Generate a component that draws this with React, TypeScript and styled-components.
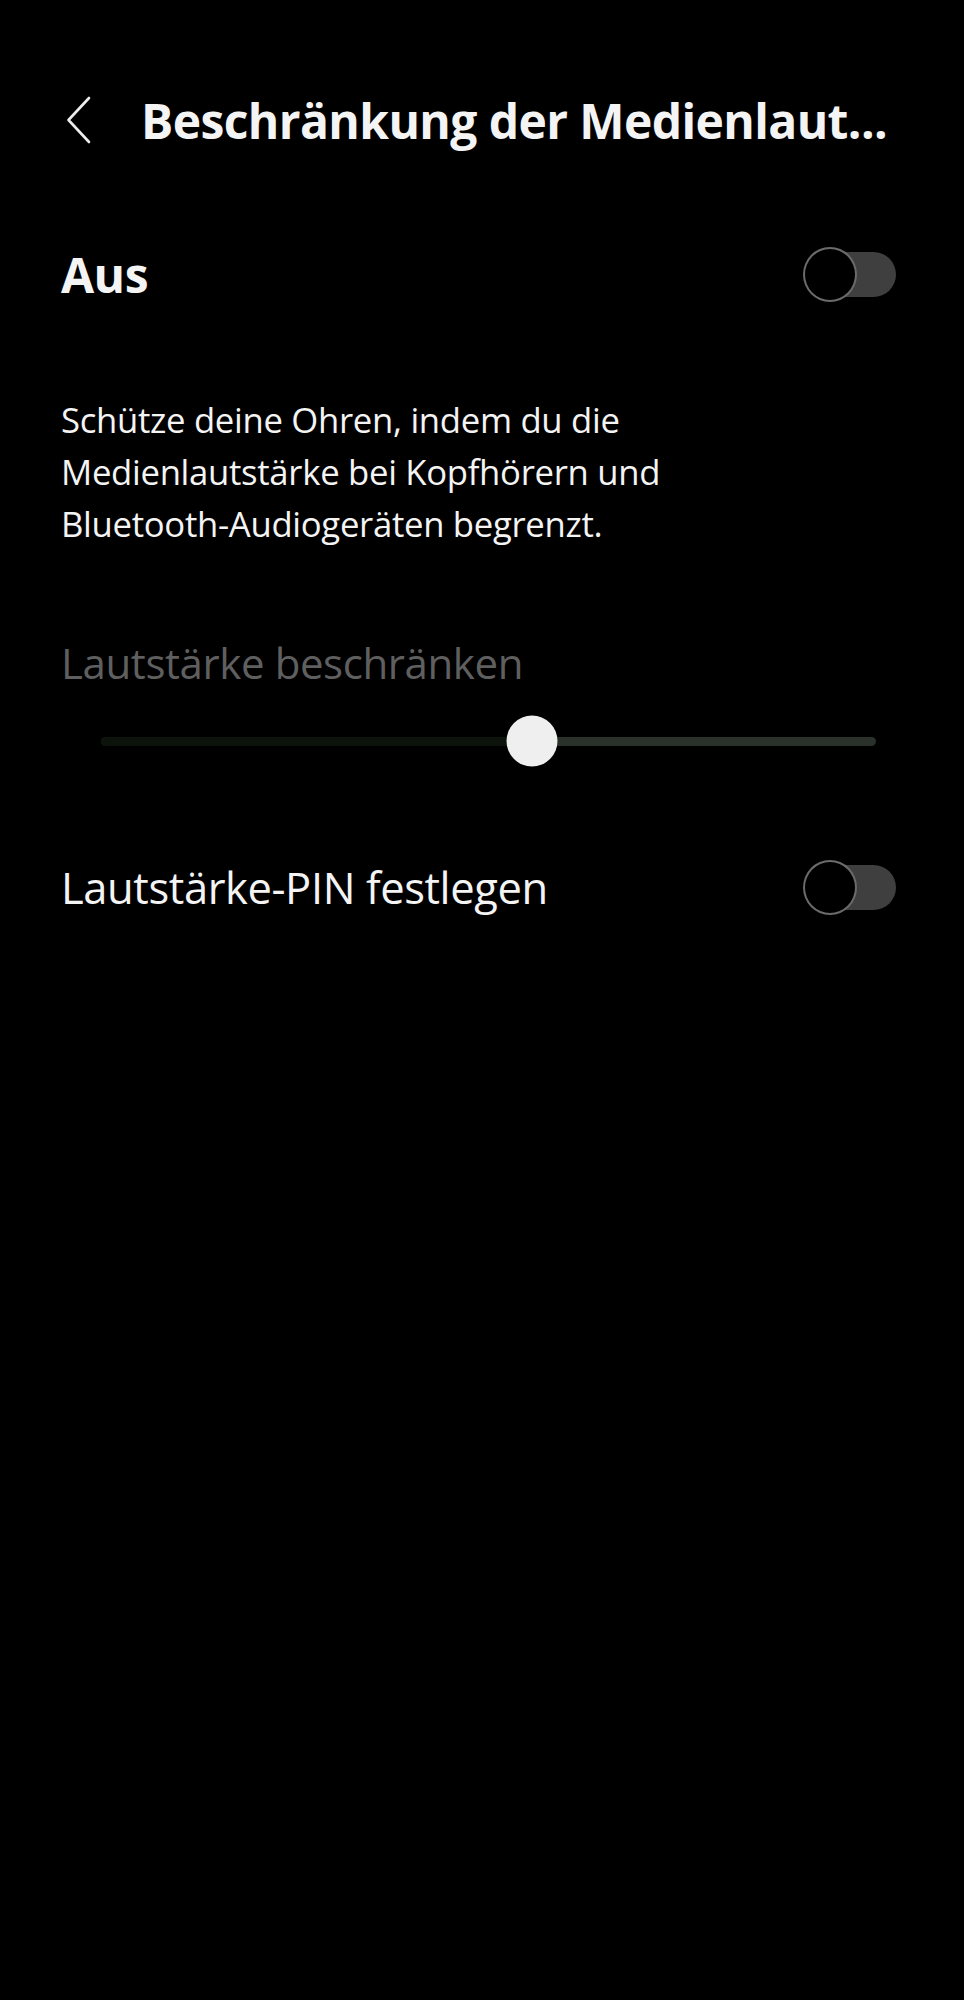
import React, { useState } from 'react';
import styled, { createGlobalStyle } from 'styled-components';

const GlobalStyle = createGlobalStyle`
  html, body {
    margin: 0;
    padding: 0;
    background: #000;
  }
  body {
    font-family: 'Open Sans', 'Noto Sans', sans-serif;
    color: #f4f4f4;
    -webkit-font-smoothing: antialiased;
  }
`;

const Page = styled.div`
  min-height: 2000px;
  box-sizing: border-box;
  padding: 80px 68px 0 61px;
  background: #000;
`;

const Header = styled.header`
  display: flex;
  align-items: center;
  height: 80px;
`;

const BackButton = styled.button`
  display: flex;
  align-items: center;
  width: 80px;
  height: 80px;
  padding: 0 0 0 5px;
  border: none;
  background: none;
  cursor: pointer;
`;

const Title = styled.h1`
  margin: 0;
  font-size: 48px;
  font-weight: 700;
  letter-spacing: -0.6px;
  white-space: nowrap;
  color: #f4f4f4;
`;

const SwitchRow = styled.div<{ $top: number }>`
  display: flex;
  align-items: center;
  justify-content: space-between;
  height: 100px;
  margin-top: ${p => p.$top}px;
`;

const RowLabel = styled.span<{ $main?: boolean }>`
  font-size: ${p => (p.$main ? 48 : 43.5)}px;
  font-weight: ${p => (p.$main ? 700 : 500)};
  letter-spacing: ${p => (p.$main ? -0.5 : -0.4)}px;
  color: #f4f4f4;
`;

const Description = styled.p`
  margin: 70px 0 0;
  max-width: 680px;
  font-size: 34.7px;
  font-weight: 500;
  line-height: 52px;
  letter-spacing: -0.3px;
  color: #f4f4f4;
`;

const SliderSection = styled.section`
  margin-top: 87px;
`;

const SliderLabel = styled.div`
  font-size: 42px;
  font-weight: 500;
  line-height: 52px;
  letter-spacing: -0.4px;
  color: #5f5f5f;
`;

const SliderArea = styled.div`
  display: flex;
  align-items: center;
  height: 60px;
  margin-top: 22px;
  padding: 0 20px 0 40px;
`;

const Track = styled.div`
  position: relative;
  flex: 1;
  height: 9px;
  border-radius: 5px;
  background: #2a302a;
`;

const TrackFill = styled.div`
  height: 100%;
  border-radius: 5px;
  background: #0b130b;
`;

const Thumb = styled.div`
  position: absolute;
  top: 50%;
  width: 51px;
  height: 51px;
  border-radius: 50%;
  background: #efefef;
  transform: translate(-50%, -50%);
`;

const ToggleTrack = styled.button<{ $on: boolean }>`
  position: relative;
  width: 86px;
  height: 45px;
  padding: 0;
  border: none;
  border-radius: 23px;
  background: ${p => (p.$on ? '#3e91ff' : '#3f3f3f')};
  cursor: pointer;
`;

const ToggleKnob = styled.span<{ $on: boolean }>`
  position: absolute;
  top: -5px;
  left: ${p => (p.$on ? '39px' : '-7px')};
  box-sizing: border-box;
  width: 54px;
  height: 55px;
  border: 2.5px solid #6b6b6b;
  border-radius: 50%;
  background: #000;
`;

const Toggle: React.FC<{ on: boolean; onToggle: () => void }> = ({ on, onToggle }) => (
  <ToggleTrack $on={on} onClick={onToggle}>
    <ToggleKnob $on={on} />
  </ToggleTrack>
);

const BackIcon = () => (
  <svg width="26" height="48" viewBox="0 0 26 48" fill="none">
    <path
      d="M23 2 L2.5 24 L23 46"
      stroke="#ededed"
      strokeWidth="2.6"
      strokeLinecap="round"
      strokeLinejoin="round"
    />
  </svg>
);

const App: React.FC = () => {
  const [limitOn, setLimitOn] = useState<boolean>(false);
  const [pinOn, setPinOn] = useState<boolean>(false);
  const level = 0.556;

  return (
    <Page>
      <GlobalStyle />
      <Header>
        <BackButton aria-label="Zurück">
          <BackIcon />
        </BackButton>
        <Title>Beschränkung der Medienlaut...</Title>
      </Header>

      <SwitchRow $top={64}>
        <RowLabel $main>Aus</RowLabel>
        <Toggle on={limitOn} onToggle={() => setLimitOn(v => !v)} />
      </SwitchRow>

      <Description>
        Schütze deine Ohren, indem du die Medienlautstärke bei Kopfhörern und
        Bluetooth-Audiogeräten begrenzt.
      </Description>

      <SliderSection>
        <SliderLabel>Lautstärke beschränken</SliderLabel>
        <SliderArea>
          <Track>
            <TrackFill style={{ width: `${level * 100}%` }} />
            <Thumb style={{ left: `${level * 100}%` }} />
          </Track>
        </SliderArea>
      </SliderSection>

      <SwitchRow $top={66}>
        <RowLabel>Lautstärke-PIN festlegen</RowLabel>
        <Toggle on={pinOn} onToggle={() => setPinOn(v => !v)} />
      </SwitchRow>
    </Page>
  );
};

export default App;
